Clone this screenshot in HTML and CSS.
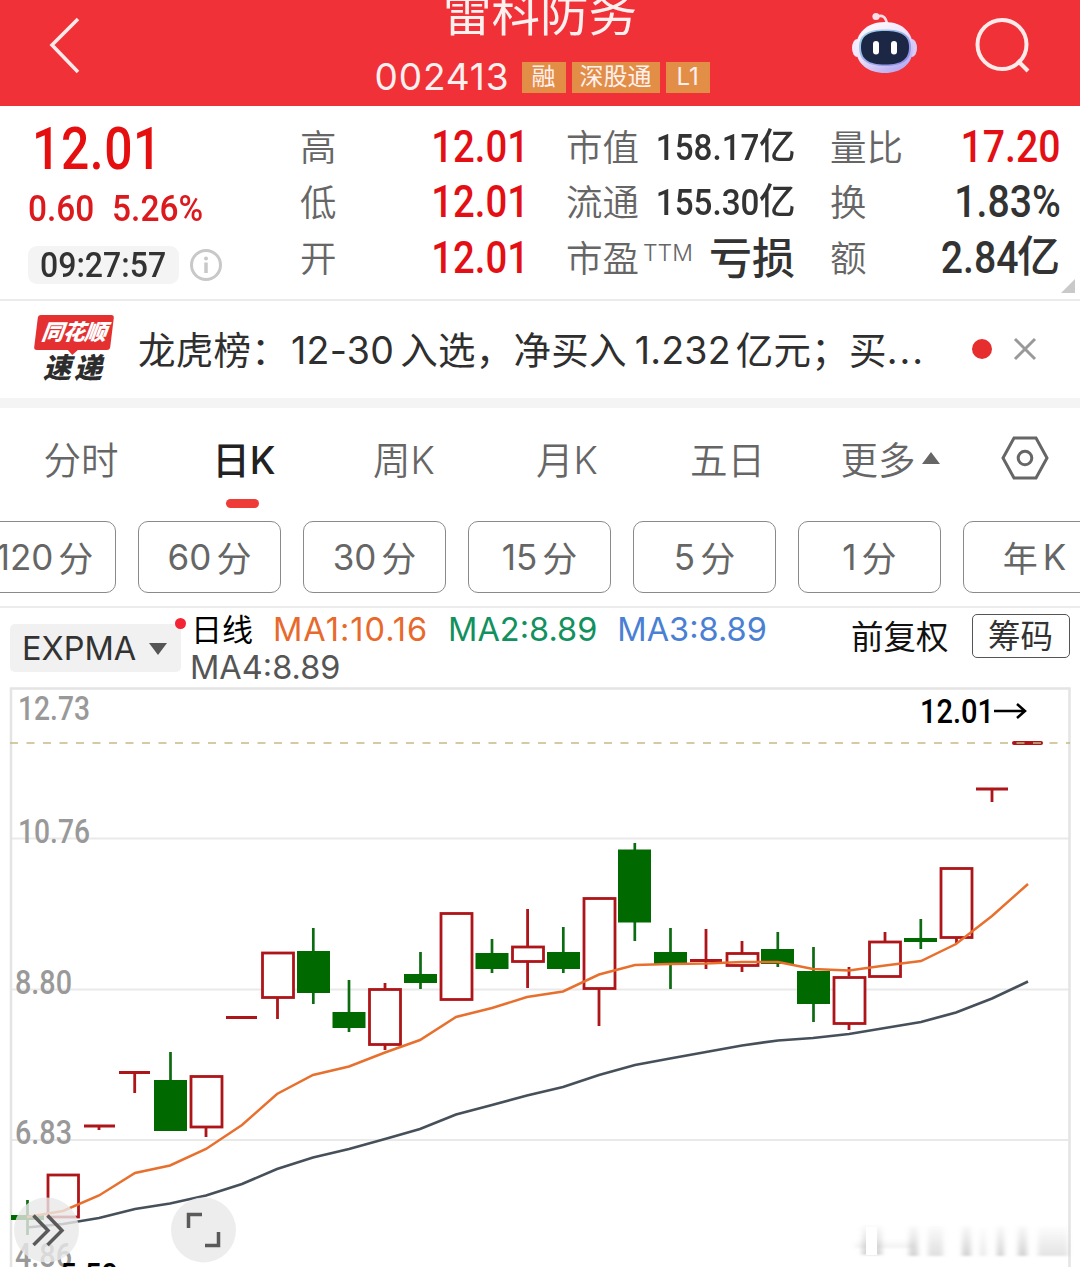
FILE: index.html
```html
<!DOCTYPE html>
<html lang="zh-CN">
<head>
    <meta charset="UTF-8">
    <meta name="viewport" content="width=device-width, initial-scale=1.0">
    <title>雷科防务 002413</title>
    <link rel="stylesheet" href="styles.css">
</head>
<body>
    <!-- Header -->
    <div class="header">
        <svg class="back-icon" width="36" height="60" viewBox="0 0 36 60">
            <path d="M31 4L5 30L31 57" fill="none" stroke="#ffe9e9" stroke-width="3.6"/>
        </svg>
        <div class="stock">
            <div class="stock-name">雷科防务</div>
            <div class="stock-info">
                <span class="stock-code">002413</span>
                <span class="tag">融</span>
                <span class="tag tag-wide">深股通</span>
                <span class="tag">L1</span>
            </div>
        </div>
        <div class="header-icons">
            <svg width="68" height="64" viewBox="0 0 68 64">
                <defs>
                    <linearGradient id="shell" x1="0" y1="0" x2="0.6" y2="1">
                        <stop offset="0" stop-color="#fff"/>
                        <stop offset="0.55" stop-color="#f0e2fb"/>
                        <stop offset="1" stop-color="#b9aef2"/>
                    </linearGradient>
                    <linearGradient id="rim" x1="0" y1="0" x2="1" y2="1">
                        <stop offset="0" stop-color="#9fdcec"/>
                        <stop offset="1" stop-color="#8f83e6"/>
                    </linearGradient>
                </defs>
                <path d="M26 6C31 3 35 6 36 13" fill="none" stroke="#fbdfe8" stroke-width="2.600"/>
                <circle cx="25" cy="5.500" r="3.600" fill="#fbdfe8"/>
                <ellipse cx="6" cy="37" rx="5" ry="9" fill="#f3e8fc"/>
                <ellipse cx="61" cy="37" rx="5" ry="9" fill="#d8ccf7"/>
                <path d="M34 11C52 11 62 22 62 37C62 53 50 62 34 62C17 62 5 53 5 37C5 22 16 11 34 11Z" fill="url(#shell)"/>
                <path d="M34 18.500C52 18.500 60 24 60 36C60 49 52 55 34 55C16 55 8 49 8 36C8 24 16 18.500 34 18.500Z" fill="url(#rim)"/>
                <path d="M34 20C51 20 58 25 58 36C58 48 51 53.500 34 53.500C17 53.500 10 48 10 36C10 25 17 20 34 20Z" fill="#1c2645"/>
                <rect x="22" y="30" width="6" height="13.500" rx="3" fill="#fff"/>
                <rect x="40" y="30" width="6" height="13.500" rx="3" fill="#fff"/>
            </svg>
            <svg width="60" height="60" viewBox="0 0 60 60">
                <circle cx="30" cy="27.500" r="24.500" fill="none" stroke="#ffe9e9" stroke-width="4"/>
                <path d="M45.500 43.500L56 54" stroke="#ffe9e9" stroke-width="4"/>
            </svg>
        </div>
    </div>

    <!-- Quote summary -->
    <div class="quote">
        <div class="quote-main">
            <div class="price num">12.01</div>
            <div class="change num"><span>0.60</span><span>5.26%</span></div>
            <div class="time-row">
                <span class="time"><span class="num">09:27:57</span></span>
                <svg width="34" height="34" viewBox="0 0 34 34">
                    <circle cx="17" cy="17" r="14.500" fill="none" stroke="#c8c8c8" stroke-width="3"/>
                    <circle cx="17" cy="10.500" r="2" fill="#c8c8c8"/>
                    <path d="M17 14.500V25" stroke="#c8c8c8" stroke-width="3.500"/>
                </svg>
            </div>
        </div>
        <div class="quote-col">
            <div class="quote-item"><span class="label">高</span><span class="num value red">12.01</span></div>
            <div class="quote-item"><span class="label">低</span><span class="num value red">12.01</span></div>
            <div class="quote-item"><span class="label">开</span><span class="num value red">12.01</span></div>
        </div>
        <div class="quote-col">
            <div class="quote-item"><span class="label">市值</span><span class="num value small">158.17<b class="unit">亿</b></span></div>
            <div class="quote-item"><span class="label">流通</span><span class="num value small">155.30<b class="unit">亿</b></span></div>
            <div class="quote-item"><span class="label">市盈<sup>TTM</sup></span><span class="value cjk">亏损</span></div>
        </div>
        <div class="quote-col">
            <div class="quote-item"><span class="label">量比</span><span class="num value red">17.20</span></div>
            <div class="quote-item"><span class="label">换</span><span class="num value">1.83%</span></div>
            <div class="quote-item"><span class="label">额</span><span class="num value">2.84<b class="unit">亿</b></span></div>
        </div>
        <div class="corner"></div>
    </div>

    <!-- News -->
    <div class="news">
        <div class="news-logo">
            <div class="logo-top">同花顺</div>
            <div class="logo-bottom">速递</div>
        </div>
        <div class="news-text">龙虎榜：<span class="n1">12-30</span>入选，净买入<span class="n2">1.232</span>亿元；买<span class="dots">...</span></div>
        <span class="news-dot"></span>
        <svg width="24" height="24" viewBox="0 0 24 24">
            <path d="M2 2L22 22M22 2L2 22" stroke="#999" stroke-width="3"/>
        </svg>
    </div>

    <!-- Period tabs -->
    <div class="tabs">
        <div class="tab">分时</div>
        <div class="tab active">日K</div>
        <div class="tab">周K</div>
        <div class="tab">月K</div>
        <div class="tab">五日</div>
        <div class="tab">更多<span class="arrow-up"></span></div>
        <div class="tab">
            <svg width="48" height="44" viewBox="0 0 48 44">
                <path d="M13 2H35L46 22L35 42H13L2 22Z" fill="none" stroke="#666" stroke-width="3"/>
                <circle cx="24" cy="22" r="6.800" fill="none" stroke="#666" stroke-width="3"/>
            </svg>
        </div>
    </div>
    <div class="periods">
        <div class="period"><span>120</span>分</div>
        <div class="period"><span>60</span>分</div>
        <div class="period"><span>30</span>分</div>
        <div class="period"><span>15</span>分</div>
        <div class="period"><span>5</span>分</div>
        <div class="period"><span>1</span>分</div>
        <div class="period">年<span>K</span></div>
    </div>

    <!-- Indicator row -->
    <div class="indicator">
        <div class="indicator-select">EXPMA<span class="arrow-down"></span><span class="badge"></span></div>
        <div class="ma-list">
            <span class="ma-name">日线</span>
            <span class="ma1">MA1:10.16</span>
            <span class="ma2">MA2:8.89</span>
            <span class="ma3">MA3:8.89</span>
            <span class="ma4">MA4:8.89</span>
        </div>
        <div class="adjust">前复权</div>
        <div class="chips">筹码</div>
    </div>

    <!-- Daily K chart -->
    <svg class="chart" width="1080" height="580" viewBox="0 687 1080 580">
        <g class="grid">
            <path d="M11 838.500H1069M11 989.500H1069M11 1140H1069"/>
            <path class="frame" d="M11 1267V688.500H1069.500V1267"/>
        </g>
        <g class="axis">
            <text x="18" y="720" textLength="72" lengthAdjust="spacingAndGlyphs">12.73</text>
            <text x="18" y="843" textLength="72" lengthAdjust="spacingAndGlyphs">10.76</text>
            <text x="15" y="993.500" textLength="57" lengthAdjust="spacingAndGlyphs">8.80</text>
            <text x="15" y="1144" textLength="57" lengthAdjust="spacingAndGlyphs">6.83</text>
            <text x="15" y="1267" textLength="57" lengthAdjust="spacingAndGlyphs">4.86</text>
        </g>

        <g class="down">
            <path d="M27.500 1200V1235M170.500 1052V1131M313.300 928V1004M349 980V1032M420.500 952V989M492 939V973M563.300 927V973M634.800 843V941M670.500 928V989M777.800 932V967M813.500 947V1022M920.800 919V949"/>
            <rect x="11" y="1215" width="33" height="5"/>
            <rect x="154" y="1080" width="33" height="51"/>
            <rect x="297" y="951" width="33" height="42"/>
            <rect x="332.500" y="1012" width="33" height="16"/>
            <rect x="404" y="974" width="33" height="9"/>
            <rect x="475.500" y="953" width="33" height="16"/>
            <rect x="547" y="952" width="33" height="17"/>
            <rect x="618" y="849.500" width="33" height="73"/>
            <rect x="654" y="952" width="33" height="12"/>
            <rect x="761" y="949" width="33" height="15"/>
            <rect x="797" y="971" width="33" height="33"/>
            <rect x="904" y="938" width="33" height="4"/>
        </g>
        <g class="up">
            <path d="M84 1126H115M99 1126V1130M119 1072.500H150M134.700 1072.500V1093M226 1017.500H257M277.500 998V1019M206 1127V1137M385 983V989M385 1045V1050M527.600 909V946M527.600 962V988M599 989V1026M706 929V969M690 960.500H722M742 941V953M742 966V972M849 967V976M849 1024V1030M885 932V941M956.500 938V943M976 789H1008M992 789V802"/>
            <path class="last" d="M1014 743H1041"/>
            <rect x="48" y="1175" width="30.500" height="42"/>
            <rect x="191" y="1076.500" width="31" height="50.500"/>
            <rect x="262.500" y="953" width="31" height="44.500"/>
            <rect x="369.500" y="989.500" width="31" height="55"/>
            <rect x="441" y="913.500" width="31" height="86"/>
            <rect x="512.500" y="947" width="31" height="14.500"/>
            <rect x="584" y="898.500" width="31" height="90"/>
            <rect x="727" y="953.500" width="31" height="12"/>
            <rect x="834" y="977.500" width="31" height="46"/>
            <rect x="869.500" y="942" width="31" height="34.500"/>
            <rect x="941" y="868.500" width="31" height="69"/>
        </g>

        <path class="price-line" d="M10 743H1070"/>
        <polyline class="line-slow" points="27,1227.500 63,1224 99,1218 135,1209 170,1203.500 206,1195.500 242,1184 277,1169 313,1157.500 349,1149 385,1139 420,1129 456,1114.500 492,1105 527,1095.500 563,1087 599,1075 635,1065 670,1058.500 706,1052 742,1045.500 778,1040.500 813,1038 849,1034 885,1028 921,1022 956,1012.500 992,998.500 1028,981.500"/>
        <polyline class="line-fast" points="27,1217 63,1211 99,1195.500 135,1173 170,1165.500 206,1149 242,1125 277,1094 313,1075 349,1066.500 385,1052.500 420,1040 456,1017 492,1008 527,997 563,991.500 599,974.500 635,965 670,964 706,963.500 742,962 778,962 813,969 849,970.500 885,965.500 921,961 956,944 992,916 1028,884"/>

        <text class="last-price" x="920" y="723" textLength="74" lengthAdjust="spacingAndGlyphs">12.01</text>
        <path class="last-arrow" d="M994 711H1025M1017 704L1025 711L1017 718"/>
        <text class="low-price" x="60" y="1287" textLength="58" lengthAdjust="spacingAndGlyphs">5.50</text>

        <g class="tool">
            <circle cx="46.500" cy="1230" r="32.500"/>
            <path d="M33.500 1215.500L48 1230.500L33.500 1245M47.500 1215.500L62 1230.500L47.500 1245"/>
            <circle cx="203.500" cy="1230" r="32.500"/>
            <path d="M188.500 1228V1214.500H202M218.500 1232V1245.500H205"/>
        </g>

        <!-- faded overlay mark -->
        <defs>
            <linearGradient id="fade" x1="0" y1="0" x2="0" y2="1">
                <stop offset="0" stop-color="#999" stop-opacity="0.050"/>
                <stop offset="1" stop-color="#999" stop-opacity="0.450"/>
            </linearGradient>
            <filter id="soft" x="-5%" y="-20%" width="110%" height="140%"><feGaussianBlur stdDeviation="2.500 0.800"/></filter>
        </defs>
        <g fill="url(#fade)" filter="url(#soft)">
            <rect x="862" y="1226" width="20" height="29"/>
            <rect x="855" y="1240" width="60" height="8" opacity="0.300"/>
            <rect x="909" y="1226" width="9" height="30"/>
            <rect x="928" y="1226" width="15" height="30" opacity="0.700"/>
            <rect x="962" y="1226" width="9" height="30"/>
            <rect x="980" y="1228" width="6" height="28" opacity="0.500"/>
            <rect x="997" y="1226" width="7" height="30"/>
            <rect x="1018" y="1226" width="9" height="30"/>
            <rect x="1038" y="1227" width="30" height="29" opacity="0.600"/>
        </g>
        <rect x="866" y="1227" width="11" height="28" fill="#fff"/>
    </svg>
</body>
</html>
```
FILE: styles.css
```css
* {
    box-sizing: border-box;
}
body {
    margin: 0;
    width: 1080px;
    height: 1267px;
    overflow: hidden;
    background-color: #fff;
    color: #333;
    font-family: Inter, "Noto Sans CJK SC", sans-serif;
    font-weight: 400;
}
/* Condensed digits */
.num {
    font-family: Roboto, "Noto Sans CJK SC", sans-serif;
    font-weight: 500;
    transform: scaleX(0.83);
    transform-origin: left center;
    display: inline-block;
    white-space: nowrap;
}
.red {
    color: #e30f14;
}

/* Header */
.header {
    display: grid;
    grid-template-columns: 300px 1fr 300px;
    height: 106px;
    background-color: #f03138;
    color: #fff0f0;
}
.back-icon {
    margin: 15px 0 0 47px;
}
.stock {
    display: flex;
    flex-direction: column;
    align-items: center;
}
.stock-name {
    height: 52px;
    margin-top: -12px;
    line-height: 52px;
    font-size: 48.5px;
    font-weight: 400;
    white-space: nowrap;
}
.stock-info {
    display: flex;
    align-items: center;
    gap: 6px;
    height: 34px;
    margin-top: 20px;
    margin-left: 4px;
}
.stock-code {
    margin-right: 6px;
    font-size: 37px;
    line-height: 34px;
    letter-spacing: 0.9px;
}
.tag {
    width: 44px;
    height: 31px;
    line-height: 30px;
    font-size: 24px;
    text-align: center;
    white-space: nowrap;
    background-color: #e28e47;
}
.tag-wide {
    width: 88px;
}
.header-icons {
    display: flex;
    align-items: flex-start;
    gap: 53px;
    padding: 11px 0 0 71px;
}
.header-icons svg + svg {
    margin-top: 6px;
}

/* Quote */
.quote {
    position: relative;
    display: grid;
    grid-template-columns: 300px 227px 229px 230px;
    height: 195px;
    border-bottom: 2px solid #ebebeb;
}
.quote-col:nth-child(3) {
    margin-left: 39px;
    margin-right: -39px;
}
.quote-col:nth-child(4) {
    margin-left: 74px;
    margin-right: -74px;
}
.quote-main {
    padding-left: 28px;
}
.price {
    display: block;
    height: 72px;
    margin-left: 4px;
    padding-top: 7px;
    line-height: 71px;
    font-size: 60px;
    letter-spacing: 0.7px;
    color: #e60f10;
}
.change {
    display: flex;
    gap: 19px;
    height: 60px;
    line-height: 62px;
    font-size: 36px;
    color: #dc1a1e;
    transform: scaleX(0.93);
}
.time-row {
    display: flex;
    align-items: center;
    gap: 10px;
    margin-top: 8px;
}
.time {
    width: 151px;
    height: 38px;
    padding-left: 12px;
    border-radius: 9px;
    line-height: 37px;
    font-size: 35px;
    background-color: #f4f4f4;
}
.time .num {
    transform: scaleX(0.915);
}
.quote-col {
    padding-top: 14px;
}
.quote-item {
    display: flex;
    align-items: center;
    justify-content: space-between;
    height: 55.5px;
}
.label {
    font-size: 36.5px;
    font-weight: 350;
    line-height: 50px;
    color: #666;
    white-space: nowrap;
}
.label sup {
    margin-left: 4px;
    font-size: 23px;
    line-height: 0;
    vertical-align: 11px;
}
.value {
    font-size: 43.5px;
    line-height: 50px;
    transform: translate(2px, -0.5px) scaleX(0.88);
    transform-origin: right center;
}
.quote-col:nth-child(4) .value {
    transform: translate(0.5px, -0.5px) scaleX(0.9);
}
.value.small {
    font-size: 36.5px;
    transform: scaleX(0.91);
}
.value.cjk {
    font-size: 43px;
    font-weight: 500;
    transform: translateY(-1.5px);
}
.unit {
    display: inline-block;
    font-weight: 500;
    transform: translateY(-1px) scaleX(1.1);
    transform-origin: right center;
    margin-left: 3px;
}
.corner {
    position: absolute;
    right: 5px;
    bottom: 6px;
    border-left: 14px solid transparent;
    border-bottom: 14px solid #c9c9c9;
}

/* News */
.news {
    display: flex;
    align-items: center;
    height: 107px;
    padding: 0 0 2px 34px;
    border-bottom: 10px solid #f4f4f4;
}
.news-logo {
    width: 80px;
    text-align: center;
    font-style: italic;
    font-weight: 900;
}
.logo-top {
    position: relative;
    height: 35px;
    margin: 0 2px;
    border-radius: 3px;
    line-height: 34px;
    font-size: 22px;
    letter-spacing: -0.5px;
    color: #fff;
    background-color: #e53031;
    transform: skewX(-7deg);
}
.logo-top::after {
    content: "";
    position: absolute;
    left: 33px;
    top: 34px;
    border: 6px solid transparent;
    border-top-color: #e53031;
    border-bottom: 0;
}
.logo-bottom {
    height: 32px;
    line-height: 37px;
    font-size: 28px;
    letter-spacing: 3px;
    color: #2d2d2d;
}
.news-text {
    width: 790px;
    margin-left: 24px;
    padding-bottom: 2px;
    font-size: 37.5px;
    letter-spacing: 0.25px;
    color: #2f2f2f;
    white-space: nowrap;
}
.n1 {
    letter-spacing: 0.3px;
    margin: 0 6px 0 2px;
}
.n2 {
    letter-spacing: 0.2px;
    margin: 0 5px 0 8px;
}
.dots {
    letter-spacing: 2px;
}
.news-dot {
    width: 20px;
    height: 20px;
    margin: 0 21px 0 44px;
    border-radius: 50%;
    background-color: #e62e2e;
}

/* Tabs */
.tabs {
    display: grid;
    grid-template-columns: 162px 164px 156px 170px 151px 174px 96px;
    height: 113px;
}
.tab {
    position: relative;
    display: flex;
    align-items: center;
    justify-content: center;
    height: 100px;
    padding-bottom: 2px;
    font-size: 37.5px;
    font-weight: 350;
    color: #666;
}
.tab:last-child {
    padding-bottom: 0;
}
.tab.active {
    font-weight: 500;
    color: #222;
}
.tab.active::after {
    content: "";
    position: absolute;
    left: 64px;
    top: 91px;
    width: 33px;
    height: 9px;
    border-radius: 5px;
    background-color: #ee3c38;
}
.arrow-up {
    margin: 2px 0 0 6px;
    border: 9px solid transparent;
    border-bottom: 12px solid #666;
    border-top: 0;
}
.periods {
    display: flex;
    gap: 22px;
    height: 87px;
    margin-left: -27px;
    border-bottom: 2px solid #ececec;
}
.period {
    flex: 0 0 143px;
    display: flex;
    align-items: center;
    justify-content: center;
    gap: 5px;
    height: 72px;
    padding-bottom: 1px;
    border: 1.5px solid #8a8a8a;
    border-radius: 10px;
    font-size: 35px;
    color: #666;
}

/* Indicator */
.indicator {
    display: flex;
    align-items: flex-start;
    height: 79px;
    padding-left: 10px;
}
.indicator-select {
    position: relative;
    display: flex;
    align-items: center;
    width: 171px;
    height: 48px;
    margin-top: 16px;
    padding: 1px 0 0 12px;
    border-radius: 5px;
    font-size: 32.5px;
    background-color: #f1f1f1;
}
.arrow-down {
    margin-left: 13px;
    border: 9px solid transparent;
    border-top: 12px solid #555;
    border-bottom: 0;
}
.badge {
    position: absolute;
    right: -5px;
    top: -6px;
    width: 11px;
    height: 11px;
    border-radius: 50%;
    background-color: #f32434;
}
.ma-list {
    display: flex;
    flex-wrap: wrap;
    column-gap: 20px;
    width: 620px;
    margin-left: 9px;
    padding-top: 3px;
    font-size: 32.5px;
    line-height: 38px;
}
.ma-name {
    margin-left: 1px;
    font-size: 31px;
    color: #000;
}
.ma1 {
    letter-spacing: 1px;
    color: #e8692c;
}
.ma2 {
    color: #12915f;
}
.ma3 {
    color: #4a80d4;
}
.ma4 {
    color: #555;
}
.adjust {
    margin: 7px 0 0 41px;
    line-height: 46px;
    font-size: 32.5px;
    color: #111;
    white-space: nowrap;
}
.chips {
    width: 98px;
    height: 44px;
    margin: 6px 0 0 23px;
    border: 1.5px solid #555;
    border-radius: 5px;
    line-height: 43px;
    font-size: 32.5px;
    text-align: center;
    white-space: nowrap;
}

/* Chart */
.chart {
    display: block;
}
.grid path {
    fill: none;
    stroke: #e9e9e9;
    stroke-width: 2;
}
.grid .frame {
    stroke: #e4e4e4;
    stroke-width: 2.5;
}
.axis text {
    font: 500 32.5px Roboto, sans-serif;
    fill: #999;
}
.down {
    fill: #006a00;
}
.down path {
    stroke: #0d6b12;
    stroke-width: 2.7;
}
.up {
    fill: #fff;
    stroke: #ad1519;
    stroke-width: 2.8;
}
.up .last {
    stroke-width: 4;
    stroke-linecap: round;
}
.price-line {
    stroke: #c9b886;
    stroke-width: 1.5;
    stroke-dasharray: 8 8.5;
}
.line-slow,
.line-fast {
    fill: none;
    stroke: #46505a;
    stroke-width: 2.7;
}
.line-fast {
    stroke: #e8702e;
    stroke-width: 2.5;
}
.last-price,
.low-price {
    font: 500 33px Roboto, sans-serif;
    fill: #000;
}
.last-arrow {
    fill: none;
    stroke: #000;
    stroke-width: 2.5;
}
.tool circle {
    fill: #e9e9e9;
    fill-opacity: 0.8;
}
.tool path {
    fill: none;
    stroke: #5a5a5a;
    stroke-width: 3.5;
}
```
